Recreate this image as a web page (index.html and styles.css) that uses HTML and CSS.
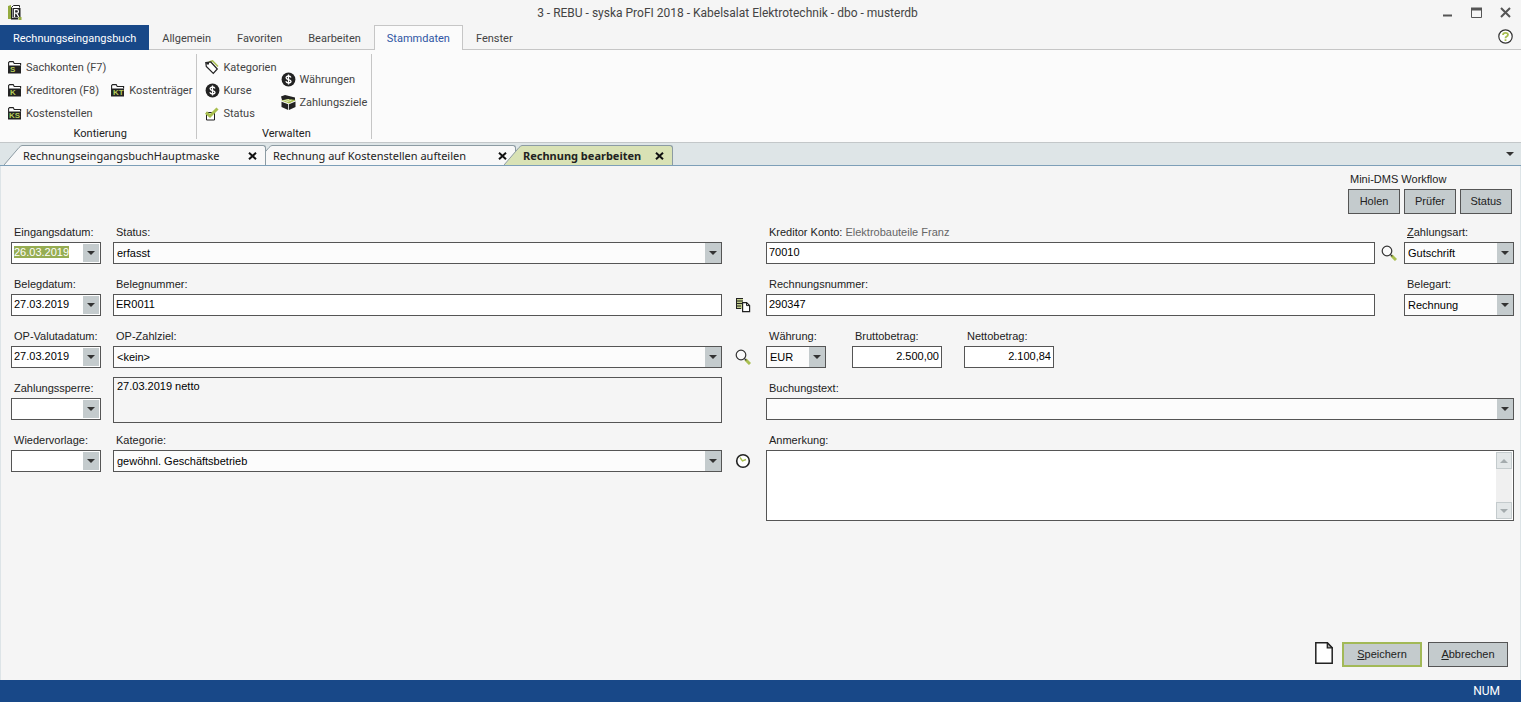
FILE: index.html
```html
<!DOCTYPE html>
<html lang="de">
<head>
    <meta charset="UTF-8">
    <meta name="viewport" content="width=device-width, initial-scale=1.0">
    <title>syska ProFI - Rechnung bearbeiten</title>
    <link rel="stylesheet" href="styles.css">
</head>
<body>

<svg class="sprite" width="0" height="0">
    <symbol id="folder" viewBox="0 0 15 13">
        <path d="M.6 12V1.500l1-.9h3.600l1 1.900h6.400v2" fill="#fff" stroke="#222" stroke-width="1.100"/>
        <path d="M1 4.500h12v8H0z" fill="#222"/>
    </symbol>
    <symbol id="coin" viewBox="0 0 15 15">
        <circle cx="7.500" cy="7.500" r="6.900" fill="#222"/>
        <path d="M10 5.500C9.500 4.400 8.700 4 7.500 4 6.100 4 5.100 4.600 5.100 5.700c0 2.500 4.900 1.200 4.900 3.600 0 1.200-1.100 1.700-2.500 1.700-1.400 0-2.300-.5-2.700-1.700M7.500 2.500v10" fill="none" stroke="#fff" stroke-width="1.300"/>
    </symbol>
    <symbol id="lens" viewBox="0 0 16 16">
        <path d="M10.500 10.500l4.500 4.500" stroke="#a9bf50" stroke-width="3"/>
        <circle cx="6" cy="6" r="4.800" fill="#fafafa" stroke="#333" stroke-width="1.200"/>
        <path d="M9.300 9.300l2 2" stroke="#333" stroke-width="1.200"/>
    </symbol>
    <symbol id="cross" viewBox="0 0 9 8">
        <path d="M1 .8l7 6.400M8 .8L1 7.200" stroke="#111" stroke-width="2"/>
    </symbol>
    <symbol id="slope" viewBox="0 0 18 20">
        <path d="M0 20L15 2.500Q17 .5 18 .5V20z" fill="currentColor"/>
        <path d="M0 20L15 2.500Q17 .5 18 .5" fill="none" stroke="#8c9ba3"/>
    </symbol>
</svg>

<header class="titlebar">
    <svg width="14" height="15" viewBox="0 0 14 15">
        <path d="M0 1l3-1v14H0z" fill="#94ab3f"/>
        <path d="M3.500 13.500v-11l2-2h6v2" fill="#fff" stroke="#222"/>
        <path d="M4.500 3h8v9.500h-8zM3 13h7v1.500H3z" fill="#222"/>
        <path d="M6.500 12V4.700h2.300q1.700 0 1.700 1.700T8.800 8.200H6.500M8.600 8.200l2.200 3.800" fill="none" stroke="#fff" stroke-width="1.300"/>
        <path d="M10.500 12h3v3h-3z" fill="#94ab3f"/>
    </svg>
    <h1 class="title">3 - REBU - syska ProFI 2018 - Kabelsalat Elektrotechnik - dbo - musterdb</h1>
    <div class="window-buttons">
        <button type="button" aria-label="Minimieren"><svg width="11" height="11"><path d="M1 8.500h9" stroke="#555" stroke-width="2"/></svg></button>
        <button type="button" aria-label="Maximieren"><svg width="11" height="11"><path d="M.5 1v9.500h10V1" fill="none" stroke="#555"/><path d="M0 2h11" stroke="#555" stroke-width="3"/></svg></button>
        <button type="button" aria-label="Schließen"><svg width="11" height="11"><path d="M1 1l9 9M10 1l-9 9" stroke="#555" stroke-width="2"/></svg></button>
    </div>
</header>

<nav class="menu">
    <button type="button" class="menu-tab main">Rechnungseingangsbuch</button>
    <button type="button" class="menu-tab">Allgemein</button>
    <button type="button" class="menu-tab">Favoriten</button>
    <button type="button" class="menu-tab">Bearbeiten</button>
    <button type="button" class="menu-tab active">Stammdaten</button>
    <button type="button" class="menu-tab">Fenster</button>
    <button type="button" class="help" aria-label="Hilfe">
        <svg width="15" height="15" viewBox="0 0 15 15">
            <circle cx="7.500" cy="7.500" r="6.700" fill="#fff" stroke="#333" stroke-width="1.200"/>
            <path d="M5 6Q5 3.800 7.500 3.800T10 5.800Q10 7 8.500 7.600 7.500 8 7.500 9.300M7.500 10.300v1.700" fill="none" stroke="#a9bf50" stroke-width="1.800"/>
        </svg>
    </button>
</nav>

<section class="ribbon">
    <div class="group">
        <div class="group-items">
            <div class="group-col">
                <button type="button" class="tool"><svg width="15" height="13"><use href="#folder"/><text x="2" y="11" class="mark">S</text></svg>Sachkonten (F7)</button>
                <button type="button" class="tool"><svg width="15" height="13"><use href="#folder"/><text x="2" y="11" class="mark">K</text></svg>Kreditoren (F8)</button>
                <button type="button" class="tool"><svg width="15" height="13"><use href="#folder"/><text x="1" y="11" class="mark">KS</text></svg>Kostenstellen</button>
            </div>
            <div class="group-col">
                <button type="button" class="tool"><svg width="15" height="13"><use href="#folder"/><text x="2" y="11" class="mark">KT</text></svg>Kostenträger</button>
            </div>
        </div>
        <div class="group-name">Kontierung</div>
    </div>
    <div class="group">
        <div class="group-items">
            <div class="group-col">
                <button type="button" class="tool">
                    <svg width="15" height="15" viewBox="0 0 15 15">
                        <path d="M4 2L7.500.8l5.500 5.700" fill="none" stroke="#a9bf50" stroke-width="1.500"/>
                        <path d="M.8 2.500l5-.5 6.500 7-4 4.500-7-7z" fill="#fff" stroke="#222" stroke-width="1.200"/>
                        <path d="M1 2.500l3-.5v2.500H1.500z" fill="#222"/>
                    </svg>Kategorien</button>
                <button type="button" class="tool"><svg width="15" height="15"><use href="#coin"/></svg>Kurse</button>
                <button type="button" class="tool">
                    <svg width="15" height="14" viewBox="0 0 15 14">
                        <path d="M1.500 5.500h8v7.500h-8z" fill="#fff" stroke="#222"/>
                        <path d="M1 5.500l4 3.500 7.500-7.500" fill="none" stroke="#a9bf50" stroke-width="3"/>
                    </svg>Status</button>
            </div>
            <div class="group-col">
                <button type="button" class="tool"><svg width="15" height="15"><use href="#coin"/></svg>Währungen</button>
                <button type="button" class="tool">
                    <svg width="15" height="15" viewBox="0 0 15 15">
                        <path d="M0 1.500L4 0l10 2.500v3L1 5z" fill="#222"/>
                        <path d="M0 5.500l7-1.500 8 1-7 3.500z" fill="#a9bf50"/>
                        <path d="M2 6l6-1.500M4.500 7.200l6-2" stroke="#dfe8bd"/>
                        <path d="M.5 6.800l6.700 2.500V15L.5 12zM8 9.300l6.500-2.800v5.500L8 15z" fill="#222"/>
                    </svg>Zahlungsziele</button>
            </div>
        </div>
        <div class="group-name">Verwalten</div>
    </div>
</section>

<nav class="doc-tabs">
    <div class="doc-tab first">
        <svg width="18" height="20"><use href="#slope"/></svg>
        <div class="doc-body">
            <button type="button" class="doc-name">RechnungseingangsbuchHauptmaske</button>
            <button type="button" class="doc-close" aria-label="Schließen"><svg width="9" height="8"><use href="#cross"/></svg></button>
        </div>
    </div>
    <div class="doc-tab">
        <svg width="18" height="20"><use href="#slope"/></svg>
        <div class="doc-body">
            <button type="button" class="doc-name">Rechnung auf Kostenstellen aufteilen</button>
            <button type="button" class="doc-close" aria-label="Schließen"><svg width="9" height="8"><use href="#cross"/></svg></button>
        </div>
    </div>
    <div class="doc-tab active">
        <svg width="18" height="20"><use href="#slope"/></svg>
        <div class="doc-body">
            <button type="button" class="doc-name">Rechnung bearbeiten</button>
            <button type="button" class="doc-close" aria-label="Schließen"><svg width="9" height="8"><use href="#cross"/></svg></button>
        </div>
    </div>
    <button type="button" class="doc-more arrow" aria-label="Alle Fenster"></button>
</nav>

<main class="page">
    <div class="workflow">
        <div class="workflow-box">
            <div class="workflow-title">Mini-DMS Workflow</div>
            <div class="workflow-buttons">
                <button type="button" class="btn small">Holen</button>
                <button type="button" class="btn small">Prüfer</button>
                <button type="button" class="btn small">Status</button>
            </div>
        </div>
    </div>

    <form class="form" id="invoice">
        <div class="field c1 r1">
            <label for="eingang">Eingangsdatum:</label>
            <div class="date"><input type="text" id="eingang" value="26.03.2019"><button type="button" class="arrow" aria-label="Kalender"></button></div>
        </div>
        <div class="field c2 r1">
            <label for="status">Status:</label>
            <div class="combo arrow"><select id="status"><option>erfasst</option></select></div>
        </div>
        <div class="field c4 r1">
            <label for="kreditor">Kreditor Konto: <span class="hint">Elektrobauteile Franz</span></label>
            <input type="text" class="text" id="kreditor" value="70010">
        </div>
        <button type="button" class="icon-btn c5 r1" aria-label="Kreditor suchen"><svg width="16" height="16"><use href="#lens"/></svg></button>
        <div class="field c6 r1">
            <label for="zahlungsart"><u>Z</u>ahlungsart:</label>
            <div class="combo arrow"><select id="zahlungsart"><option>Gutschrift</option></select></div>
        </div>

        <div class="field c1 r2">
            <label for="belegdatum">Belegdatum:</label>
            <div class="date"><input type="text" id="belegdatum" value="27.03.2019"><button type="button" class="arrow" aria-label="Kalender"></button></div>
        </div>
        <div class="field c2 r2">
            <label for="belegnummer">Belegnummer:</label>
            <input type="text" class="text" id="belegnummer" value="ER0011">
        </div>
        <button type="button" class="icon-btn c3 r2" aria-label="Kopieren">
            <svg width="16" height="16" viewBox="0 0 16 16">
                <path d="M1 1h7v11H1z" fill="#c3cf8d"/>
                <path d="M8 1.500H1M1 4h7M1 6.500h6M1 9h5M1 11.500h5M1.500 1v11" stroke="#222" fill="none"/>
                <path d="M7.600 5.600h4l3 3v6h-7z" fill="#fff" stroke="#222" stroke-width="1.200"/>
                <path d="M11.500 5.600v3h3" fill="none" stroke="#222"/>
            </svg>
        </button>
        <div class="field c4 r2">
            <label for="rechnungsnummer">Rechnungsnummer:</label>
            <input type="text" class="text" id="rechnungsnummer" value="290347">
        </div>
        <div class="field c6 r2">
            <label for="belegart">Belegart:</label>
            <div class="combo arrow"><select id="belegart"><option>Rechnung</option></select></div>
        </div>

        <div class="field c1 r3">
            <label for="valuta">OP-Valutadatum:</label>
            <div class="date"><input type="text" id="valuta" value="27.03.2019"><button type="button" class="arrow" aria-label="Kalender"></button></div>
        </div>
        <div class="field c2 r3">
            <label for="zahlziel">OP-Zahlziel:</label>
            <div class="combo arrow"><select id="zahlziel"><option>&lt;kein&gt;</option></select></div>
        </div>
        <button type="button" class="icon-btn c3 r3" aria-label="Zahlziel suchen"><svg width="16" height="16"><use href="#lens"/></svg></button>
        <div class="amounts c4 r3">
            <div class="field currency">
                <label for="waehrung">Währung:</label>
                <div class="combo arrow"><select id="waehrung"><option>EUR</option></select></div>
            </div>
            <div class="field amount">
                <label for="brutto">Bruttobetrag:</label>
                <input type="text" class="text number" id="brutto" value="2.500,00">
            </div>
            <div class="field amount">
                <label for="netto">Nettobetrag:</label>
                <input type="text" class="text number" id="netto" value="2.100,84">
            </div>
        </div>

        <div class="field c1 r4">
            <label for="sperre">Zahlungssperre:</label>
            <div class="date"><input type="text" id="sperre"><button type="button" class="arrow" aria-label="Kalender"></button></div>
        </div>
        <textarea class="terms c2 r4" aria-label="Zahlungsbedingungen" readonly>27.03.2019 netto</textarea>
        <div class="field wide r4">
            <label for="buchungstext">Buchungstext:</label>
            <div class="combo arrow"><select id="buchungstext"><option></option></select></div>
        </div>

        <div class="field c1 r5">
            <label for="vorlage">Wiedervorlage:</label>
            <div class="date"><input type="text" id="vorlage"><button type="button" class="arrow" aria-label="Kalender"></button></div>
        </div>
        <div class="field c2 r5">
            <label for="kategorie">Kategorie:</label>
            <div class="combo arrow"><select id="kategorie"><option>gewöhnl. Geschäftsbetrieb</option></select></div>
        </div>
        <button type="button" class="icon-btn c3 r5" aria-label="Verlauf">
            <svg width="16" height="16" viewBox="0 0 16 16">
                <circle cx="8" cy="8" r="6.300" fill="#fff" stroke="#222" stroke-width="1.600"/>
                <path d="M5 4.500L7.500 8l3.500-1.500" fill="none" stroke="#a9bf50" stroke-width="1.400"/>
            </svg>
        </button>
        <div class="field wide r5">
            <label for="anmerkung">Anmerkung:</label>
            <div class="memo">
                <textarea id="anmerkung"></textarea>
                <div class="scroll">
                    <button type="button" class="arrow up" aria-label="Nach oben"></button>
                    <button type="button" class="arrow" aria-label="Nach unten"></button>
                </div>
            </div>
        </div>
    </form>

    <div class="actions">
        <button type="button" class="new-doc" aria-label="Neu">
            <svg width="18" height="22" viewBox="0 0 18 22">
                <path d="M.8.800h11.500l4.900 5v15.400H.8z" fill="#fff" stroke="#222" stroke-width="1.500"/>
                <path d="M12.300.8v5h4.900z" fill="#aaa" stroke="#222" stroke-width="1.300"/>
            </svg>
        </button>
        <button type="submit" form="invoice" class="btn save"><u>S</u>peichern</button>
        <button type="button" class="btn"><u>A</u>bbrechen</button>
    </div>
</main>

<footer class="statusbar">NUM</footer>

<script>
    const first = document.getElementById('eingang');
    first.focus();
    first.select();
</script>

</body>
</html>
```
FILE: styles.css
```css
* {
    box-sizing: border-box;
}

body {
    margin: 0;
    min-height: 100vh;
    display: flex;
    flex-direction: column;
    background-color: #f5f5f5;
    color: #222;
    font-family: "Liberation Sans", Arial, sans-serif;
    font-size: 11px;
}

button {
    margin: 0;
    padding: 0;
    border: 0;
    background: none;
    color: inherit;
    font: inherit;
}

input,
select,
textarea {
    font: inherit;
    color: #000;
    outline: 0;
}

.sprite {
    position: absolute;
}

svg {
    flex: none;
}

/* title bar */
.titlebar {
    display: flex;
    align-items: center;
    height: 25px;
    padding: 0 10px 0 8px;
    font-family: Roboto, "Open Sans", sans-serif;
}

.title {
    flex: 1;
    margin: 0;
    text-align: center;
    font-size: 12px;
    font-weight: normal;
    color: #444;
}

.window-buttons {
    display: flex;
    gap: 18px;
    margin-left: 9px;
}

.window-buttons button {
    display: flex;
}

/* ribbon */
.menu {
    display: flex;
    height: 25px;
    border-bottom: 1px solid #c6c6c6;
    font-family: Roboto, "Open Sans", sans-serif;
}

.menu-tab {
    height: 25px;
    padding: 0 12px;
    border: 1px solid transparent;
    border-bottom: 0;
    color: #444;
}

.menu-tab.main {
    background-color: #184888;
    color: #fff;
}

.menu-tab.active {
    background-color: #fbfbfb;
    border-color: #c6c6c6;
    color: #2f55a4;
}

.help {
    display: flex;
    align-items: center;
    margin-left: auto;
    padding: 0 8px 2px 0;
}

.ribbon {
    display: flex;
    height: 92px;
    padding: 4px 0 3px;
    background-color: #fbfbfb;
    font-family: Roboto, "Open Sans", sans-serif;
    color: #444;
}

.group {
    padding: 2px 4px 0 8px;
    border-right: 1px solid #c6c6c6;
}

.group-items {
    display: flex;
    align-items: center;
    gap: 5px;
    height: 69px;
}

.tool {
    display: flex;
    align-items: center;
    gap: 3px;
    height: 23px;
    white-space: nowrap;
}

.mark {
    font: bold 8px "Liberation Sans", sans-serif;
    fill: #b5cc5a;
}

.group-name {
    padding-top: 3px;
    line-height: 12px;
    text-align: center;
    color: #222;
}

/* open documents */
.doc-tabs {
    display: flex;
    align-items: flex-end;
    height: 24px;
    padding-left: 4px;
    border-top: 1px solid #c3c7c9;
    border-bottom: 1px solid #7d9fb8;
    background-color: #dee5e7;
    font-family: "Noto Sans", sans-serif;
}

.doc-tab {
    display: flex;
    position: relative;
    z-index: 1;
    width: 262px;
    height: 20px;
    margin-left: -12px;
    color: #f8f8f8;
}

.doc-tab.first {
    z-index: 2;
    margin-left: 0;
}

.doc-tab.active {
    z-index: 3;
    width: 169px;
    height: 21px;
    padding-bottom: 1px;
    margin-bottom: -1px;
    color: #d9e2b5;
    font-weight: bold;
}

.doc-body {
    flex: 1;
    display: flex;
    align-items: center;
    justify-content: space-between;
    padding: 0 8px 0 1px;
    border-top: 1px solid #8c9ba3;
    border-right: 1px solid #8c9ba3;
    border-radius: 0 3px 0 0;
    background-color: currentColor;
}

.doc-name {
    color: #222;
    white-space: nowrap;
}

.doc-close {
    display: flex;
}

.doc-more {
    align-self: center;
    margin: 0 7px 0 auto;
}

/* small triangle shared by all drop-downs */
.arrow::after {
    content: "";
    display: block;
    border: 4px solid transparent;
    border-top-color: #333;
    border-bottom: 0;
}

.arrow.up::after {
    transform: rotate(180deg);
}

/* page */
.page {
    flex: 1;
    display: flex;
    flex-direction: column;
    padding: 5px 6px 13px 10px;
    border: solid #dde4e7;
    border-width: 0 1px;
}

.workflow {
    display: flex;
    justify-content: flex-end;
    padding: 0 2px 10px 0;
}

.workflow-title {
    padding-left: 2px;
    line-height: 16px;
    margin-bottom: 2px;
}

.workflow-buttons {
    display: flex;
    gap: 4px;
}

.btn {
    width: 80px;
    height: 25px;
    padding-bottom: 2px;
    border: 1px solid #555;
    background-color: #c4cbcd;
}

.btn.small {
    width: 52px;
}

.btn.save {
    border: 2px solid #a2b957;
}

.form {
    display: grid;
    grid-template-columns: 90px 12px 1fr 44px 1fr 29px 110px;
    grid-auto-rows: 40px;
    row-gap: 12px;
}

.c1 { grid-column: 1; }
.c2 { grid-column: 3; }
.c3 { grid-column: 4; }
.c4 { grid-column: 5; }
.c5 { grid-column: 6; }
.c6 { grid-column: 7; }
.wide { grid-column: 5 / 8; }
.r1 { grid-row: 1; }
.r2 { grid-row: 2; }
.r3 { grid-row: 3; }
.r4 { grid-row: 4; }
.r5 { grid-row: 5; }

.field label {
    display: block;
    padding-left: 3px;
    margin-bottom: 2px;
    line-height: 16px;
    white-space: nowrap;
}

.hint {
    color: #666;
}

.text,
.date,
.combo,
.memo,
.terms {
    width: 100%;
    height: 22px;
    border: 1px solid #555;
    background-color: #fff;
}

.text {
    display: block;
    padding: 0 2px 2px;
}

.number {
    text-align: right;
}

.date {
    display: flex;
    padding: 1px 1px 1px 0;
}

.date input {
    flex: 1;
    min-width: 0;
    padding: 0 2px 2px;
    border: 0;
    background: none;
}

.date input::selection {
    background-color: #96ad52;
    color: #fff;
}

.date button {
    display: flex;
    align-items: center;
    justify-content: center;
    width: 16px;
    background-color: #c4cbcd;
}

.combo {
    display: flex;
    position: relative;
    align-items: center;
    background-color: #fcfcfc;
}

.combo select {
    flex: 1;
    height: 20px;
    padding: 0 19px 0 3px;
    border: 0;
    appearance: none;
    background: linear-gradient(#c4cbcd, #c4cbcd) right / 16px 100% no-repeat;
}

.combo::after {
    position: absolute;
    right: 4px;
    pointer-events: none;
}

.icon-btn {
    display: flex;
    align-items: center;
    justify-content: center;
    align-self: end;
    height: 22px;
    padding-right: 2px;
}

.amounts {
    display: flex;
    gap: 22px;
}

.currency {
    width: 64px;
    padding-right: 4px;
}

.amount {
    width: 90px;
}

.terms {
    align-self: center;
    height: 46px;
    padding: 2px 3px;
    background-color: #f5f5f5;
    resize: none;
}

.memo {
    display: flex;
    height: 71px;
    padding: 1px;
}

.memo textarea {
    flex: 1;
    padding: 2px;
    border: 0;
    resize: none;
}

.scroll {
    display: flex;
    flex-direction: column;
    justify-content: space-between;
    background-color: #f0f0f0;
}

.scroll button {
    display: flex;
    align-items: center;
    justify-content: center;
    width: 16px;
    height: 17px;
    border: 1px solid #c4cbcd;
    background-color: #e3e7e8;
}

.scroll .arrow::after {
    border-top-color: #a4abad;
}

.actions {
    display: flex;
    justify-content: flex-end;
    gap: 6px;
    margin-top: auto;
    padding-right: 6px;
}

.new-doc {
    display: flex;
    margin-right: 3px;
}

.statusbar {
    height: 22px;
    padding-right: 21px;
    background-color: #184888;
    color: #fff;
    font-family: Roboto, "Open Sans", sans-serif;
    font-size: 12px;
    line-height: 22px;
    text-align: right;
}
```
